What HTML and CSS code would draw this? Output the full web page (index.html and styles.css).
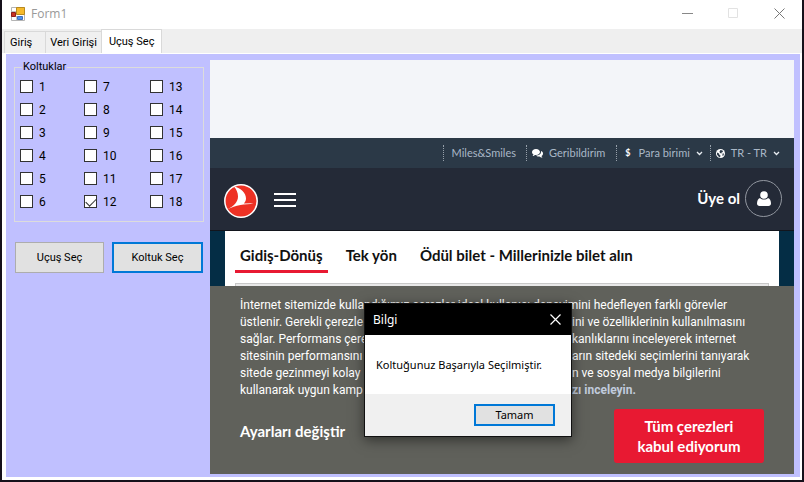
FILE: index.html
```html
<!DOCTYPE html>
<html lang="tr">
<head>
<meta charset="utf-8">
<meta name="viewport" content="width=device-width, initial-scale=1">
<title>Form1</title>
<link rel="stylesheet" href="styles.css">
</head>
<body>
<div class="window">
  <header class="titlebar">
    <svg class="app-icon" viewBox="0 0 14 14" aria-hidden="true">
      <path fill="#fff" stroke="#b4b4b4" d="M.5.5h13v13H.5z"/>
      <path stroke="#c4c4c4" d="M.5 4.500h5M5.500 9v4"/>
      <path fill="#f5b92c" stroke="#b88a20" d="M5.500.5h8v7h-8z"/>
      <path fill="#c93222" stroke="#8f1f18" d="M.5 5.500h4v4h-4z"/>
      <path fill="#4d92ec" stroke="#3e6fbd" d="M6.500 9.500h5v3h-5z"/>
    </svg>
    <span class="title">Form1</span>
    <div class="window-buttons">
      <button type="button" aria-label="Simge durumuna küçült"><svg viewBox="0 0 11 11"><path d="M0 5.500h11" stroke="#888"/></svg></button>
      <button type="button" aria-label="Ekranı kapla" disabled><svg viewBox="0 0 11 11"><path d="M.5.5h9v9h-9z" fill="none" stroke="#e2e2e2"/></svg></button>
      <button type="button" aria-label="Kapat"><svg viewBox="0 0 11 11"><path d="M.5.5l10 10M10.500.5l-10 10" stroke="#777"/></svg></button>
    </div>
  </header>

  <nav class="tabs">
    <button type="button" class="tab">Giriş</button>
    <button type="button" class="tab">Veri Girişi</button>
    <button type="button" class="tab tab-active">Uçuş Seç</button>
  </nav>

  <main class="page">
    <section class="side">
      <fieldset class="seats">
        <legend>Koltuklar</legend>
        <label><input type="checkbox">1</label>
        <label><input type="checkbox">2</label>
        <label><input type="checkbox">3</label>
        <label><input type="checkbox">4</label>
        <label><input type="checkbox">5</label>
        <label><input type="checkbox">6</label>
        <label><input type="checkbox">7</label>
        <label><input type="checkbox">8</label>
        <label><input type="checkbox">9</label>
        <label><input type="checkbox">10</label>
        <label><input type="checkbox">11</label>
        <label><input type="checkbox" checked>12</label>
        <label><input type="checkbox">13</label>
        <label><input type="checkbox">14</label>
        <label><input type="checkbox">15</label>
        <label><input type="checkbox">16</label>
        <label><input type="checkbox">17</label>
        <label><input type="checkbox">18</label>
      </fieldset>
      <div class="actions">
        <button type="button" class="btn">Uçuş Seç</button>
        <button type="button" class="btn btn-default">Koltuk Seç</button>
      </div>
    </section>

    <section class="browser">
      <div class="blank"></div>
      <nav class="utility">
        <a href="#">Miles&amp;Smiles</a>
        <a href="#"><svg width="11" height="9" viewBox="0 0 22 18"><path fill="#fff" d="M8 0c5 0 8 3 8 6s-3 6-8 6H6c-2 2-4 2-5 2 1-1 2-2 2-3C1 10 0 8 0 6c0-3 3-6 8-6zM18 4c3 1 4 3 4 5s-1 4-3 5c0 1 1 2 2 3-2 0-4 0-6-2-3 0-5 0-7-2 6 0 10-3 10-7z"/></svg>Geribildirim</a>
        <a href="#" class="currency"><b>$</b>Para birimi<svg width="7" height="5" viewBox="0 0 7 5"><path d="M1 1l2.500 2.500L6 1" fill="none" stroke="#e8edf2" stroke-width="1.300"/></svg></a>
        <a href="#" class="language"><svg width="9" height="9" viewBox="0 0 18 18"><circle cx="9" cy="9" r="9" fill="#fff"/><path fill="#2b3947" d="M9 2l4 1 1 3-3 1 0 2-3-1-1-3zM2 7l4 2 1 3 2 1-1 4-3-2-3-4zM13 9l3 0-1 4-2 1z"/></svg>TR - TR<svg width="7" height="5" viewBox="0 0 7 5"><path d="M1 1l2.500 2.500L6 1" fill="none" stroke="#e8edf2" stroke-width="1.300"/></svg></a>
      </nav>
      <div class="brandbar">
        <svg class="logo" viewBox="0 0 34 34" role="img" aria-label="Logo">
          <circle cx="17" cy="17" r="16.200" fill="#ee3124" stroke="#fff" stroke-width="1.500"/>
          <path fill="#fff" d="M10 2.500C17 4 22 9 22 14.500c0 2-1 3.500-2 5l9.500-.3c-4 1.200-9 1-13 1.800-5 1-9 2.500-13 4.200C10 22 14 18 14 12.500c0-4-1.500-7-4-10z"/>
        </svg>
        <button type="button" class="menu" aria-label="Menü"><i></i><i></i><i></i></button>
        <a href="#" class="signup">Üye ol
          <span class="avatar"><svg width="14" height="15" viewBox="0 0 14 15"><circle cx="7" cy="4" r="3.800" fill="#fff"/><path fill="#fff" d="M3 7c1 1 2.500 1.500 4 1.500S10 8 11 7c2 .8 3 3 3 5.500 0 1.500-1 2.500-2.500 2.500h-9C1 15 0 14 0 12.500 0 10 1 7.800 3 7z"/></svg></span>
        </a>
      </div>
      <div class="booking">
        <div class="card">
          <nav class="trip-tabs">
            <a href="#" class="current">Gidiş-Dönüş</a>
            <a href="#">Tek yön</a>
            <a href="#">Ödül bilet - Millerinizle bilet alın</a>
          </nav>
          <div class="search-top"></div>
        </div>
      </div>
      <div class="cookies">
        <div class="notice">
          <p>İnternet sitemizde kullandığımız çerezler ideal kullanıcı deneyimini hedefleyen farklı görevler</p>
          <p class="split"><span>üstlenir. Gerekli çerezle</span><span>ini ve özelliklerinin kullanılmasını</span></p>
          <p class="split"><span>sağlar. Performans çere</span><span>kanlıklarını inceleyerek internet</span></p>
          <p class="split"><span>sitesinin performansını</span><span>arın sitedeki seçimlerini tanıyarak</span></p>
          <p class="split"><span>sitede gezinmeyi kolay</span><span>n ve sosyal medya bilgilerini</span></p>
          <p class="split"><span>kullanarak uygun kamp</span><a href="#">zı inceleyin.</a></p>
        </div>
        <div class="choices">
          <a href="#" class="settings">Ayarları değiştir</a>
          <button type="button" class="accept">Tüm çerezleri<br>kabul ediyorum</button>
        </div>
      </div>
    </section>
  </main>
</div>

<div class="dialog" role="dialog" aria-labelledby="dialog-title">
  <div class="dialog-title">
    <span id="dialog-title">Bilgi</span>
    <button type="button" aria-label="Kapat"><svg width="11" height="11" viewBox="0 0 11 11"><path d="M.5.5l10 10M10.500.5l-10 10" stroke="#fff" stroke-width="1.200"/></svg></button>
  </div>
  <p class="dialog-text">Koltuğunuz Başarıyla Seçilmiştir.</p>
  <div class="dialog-footer"><button type="button" class="ok">Tamam</button></div>
</div>
</body>
</html>
```
FILE: styles.css
```css
* { box-sizing: border-box; }

body {
  margin: 0;
  min-height: 100vh;
  display: flex;
  padding: 0 2px 2px;
  background: #15101a;
  font-family: Roboto, "Liberation Sans", sans-serif;
  font-size: 11px;
  line-height: 16px;
  color: #000;
}

button { font: inherit; color: inherit; padding: 0; border: 0; background: none; }
a { color: inherit; text-decoration: none; }
p { margin: 0; }
svg { flex: none; }

.window { flex: 1; display: flex; flex-direction: column; background: #fff; }

.titlebar { display: flex; align-items: center; height: 29px; padding: 0 0 2px 9px; }
.app-icon { width: 14px; height: 14px; }
.title { margin-left: 6px; color: #999; font-family: "Open Sans", sans-serif; font-size: 12px; }
.window-buttons { margin-left: auto; display: flex; }
.window-buttons button { width: 46px; display: flex; justify-content: center; }
.window-buttons svg { width: 11px; height: 11px; }

.tabs { display: flex; align-items: flex-end; height: 24px; padding-left: 2px; background: #efefef; }
.tab { height: 22px; padding: 0 4px; border: 1px solid #d9d9d9; border-bottom: 0; background: #f0f0f0; }
.tab:first-child { padding: 0 13px 0 5px; border-right: 0; }
.tab-active { height: 24px; padding: 0 7px; margin-left: -1px; background: #fff; }

.page {
  flex: 1;
  display: flex;
  margin: 0 1px 1px;
  border: solid #fff;
  border-width: 1px 1px 2px 3px;
  padding: 6px 6px 3px 8px;
  background: #c0c0ff;
}

.side { width: 196px; flex: none; }
.seats {
  display: grid;
  grid-template-rows: repeat(6, 23px);
  grid-template-columns: 64px 66px 1fr;
  grid-auto-flow: column;
  margin: 0 6px 0 0;
  height: 162px;
  padding: 1px 5px 0;
  border: 1px solid #dcdcdc;
  font-size: 12px;
}
.seats legend { padding: 0 1px; margin-left: 2px; font-size: 11px; line-height: 14px; }
.seats label { display: flex; align-items: center; gap: 6px; }
.seats input {
  appearance: none;
  width: 13px;
  height: 13px;
  margin: 0;
  border: 1px solid #333;
  background: #fff;
}
.seats input:checked::after {
  content: "";
  display: block;
  width: 9px;
  height: 5px;
  margin: 2px 1px;
  border: solid #333;
  border-width: 0 0 1px 1px;
  transform: rotate(-45deg);
}

.actions { display: flex; gap: 8px; margin: 20px 7px 0 1px; }
.btn { flex: 1; height: 31px; border: 1px solid #adadad; background: #e1e1e1; }
.btn-default { border: 2px solid #0078d7; }

.browser {
  flex: 1;
  display: flex;
  flex-direction: column;
  font-family: Lato, sans-serif;
  color: #fff;
}
.blank { height: 78px; background: #f3f5f9; }

.utility {
  display: flex;
  align-items: center;
  justify-content: flex-end;
  height: 30px;
  padding-right: 4px;
  background: #2b3947;
  color: #a9b7c6;
  font-size: 11px;
}
.utility a {
  display: flex;
  align-items: center;
  gap: 6px;
  padding: 0 10px 0 8px;
  border-left: 1px dotted #96a0aa;
}
.utility a + a { padding: 0 11px 0 5px; }
.utility a.currency { padding: 0 7px 0 8px; }
.utility a.language { padding-right: 10px; }
.utility b { color: #fff; font-size: 9px; margin-right: 2px; }

.brandbar {
  display: flex;
  align-items: center;
  height: 63px;
  padding: 0 12px 0 14px;
  border-bottom: 1px solid #12151d;
  background: #242a37;
}
.logo { width: 34px; height: 34px; margin-top: 3px; }
.menu { display: flex; flex-direction: column; gap: 4px; width: 22px; margin: 2px 0 0 16px; }
.menu i { height: 2px; background: #fff; }
.signup { display: flex; align-items: center; gap: 5px; margin-left: auto; margin-top: -2px; font-size: 15px; font-weight: 700; }
.avatar {
  display: grid;
  place-items: center;
  width: 37px;
  height: 37px;
  border: 1px solid #9297a0;
  border-radius: 50%;
}

.booking { padding: 0 15px; background: #042d45; color: #111; }
.card { height: 55px; padding: 0 10px; background: #fff; overflow: hidden; }
.trip-tabs { display: flex; gap: 13px; height: 42px; font-size: 15px; line-height: 20px; font-weight: 700; }
.trip-tabs a { padding: 14px 5px 0; }
.trip-tabs .current { border-bottom: 3px solid #e81932; }
.search-top { height: 10px; margin-top: 10px; border: 1px solid #c8c8c8; background: #e8e8e8; }

.cookies { flex: 1; padding: 11px 30px 0; background: #60615b; }
.notice { font-family: Roboto, sans-serif; font-size: 12px; line-height: 17px; white-space: nowrap; }
.split { display: grid; grid-template-columns: 332px 1fr; }
.notice a { color: #c0cbdc; font-weight: 700; }
.choices { display: flex; justify-content: space-between; margin-top: 10px; }
.settings { margin-top: 14px; font-size: 15px; font-weight: 700; }
.accept {
  width: 150px;
  height: 54px;
  border-radius: 3px;
  background: #e81932;
  font-size: 15px;
  line-height: 20px;
  font-weight: 700;
}

.dialog {
  position: absolute;
  left: 364px;
  top: 303px;
  width: 208px;
  border: 1px solid #111;
  background: #fff;
  box-shadow: 0 3px 12px rgba(0, 0, 0, 0.5);
  font-family: "Noto Sans", sans-serif;
}
.dialog-title {
  display: flex;
  align-items: center;
  justify-content: space-between;
  height: 31px;
  padding: 0 10px 0 8px;
  background: #000;
  color: #fff;
  font-size: 12px;
}
.dialog-title button { display: flex; }
.dialog-text { padding: 22px 11px 21px; }
.dialog-footer { display: flex; justify-content: flex-end; padding: 10px 16px; background: #f0f0f0; }
.ok { width: 81px; height: 22px; border: 2px solid #0078d7; background: #e1e1e1; line-height: 16px; }
```
